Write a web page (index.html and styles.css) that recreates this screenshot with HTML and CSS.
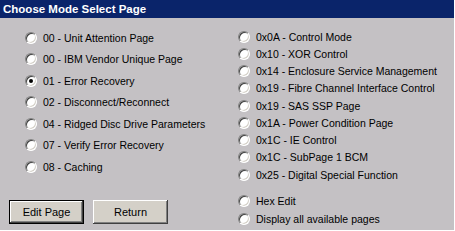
FILE: index.html
```html
<!doctype html>
<html lang="en">
  <head>
    <meta charset="UTF-8" />
    <title>Choose Mode Select Page</title>
    <link rel="stylesheet" href="styles.css">
  </head>
  <body>
    <div class="window">
      <div class="titlebar">Choose Mode Select Page</div>

      <div class="panel">
        <div class="col-left">
          <div class="options wide">
            <label class="opt"><span class="radio"></span>00 - Unit Attention Page</label>
            <label class="opt"><span class="radio"></span>00 - IBM Vendor Unique Page</label>
            <label class="opt"><span class="radio checked"></span>01 - Error Recovery</label>
            <label class="opt"><span class="radio"></span>02 - Disconnect/Reconnect</label>
            <label class="opt"><span class="radio"></span>04 - Ridged Disc Drive Parameters</label>
            <label class="opt"><span class="radio"></span>07 - Verify Error Recovery</label>
            <label class="opt"><span class="radio"></span>08 - Caching</label>
          </div>

          <div class="buttons">
            <button class="btn default">Edit Page</button>
            <button class="btn">Return</button>
          </div>
        </div>

        <div class="col-right">
          <div class="options">
            <label class="opt"><span class="radio"></span>0x0A - Control Mode</label>
            <label class="opt"><span class="radio"></span>0x10 - XOR Control</label>
            <label class="opt"><span class="radio"></span>0x14 - Enclosure Service Management</label>
            <label class="opt"><span class="radio"></span>0x19 - Fibre Channel Interface Control</label>
            <label class="opt"><span class="radio"></span>0x19 - SAS SSP Page</label>
            <label class="opt"><span class="radio"></span>0x1A - Power Condition Page</label>
            <label class="opt"><span class="radio"></span>0x1C - IE Control</label>
            <label class="opt"><span class="radio"></span>0x1C - SubPage 1 BCM</label>
            <label class="opt"><span class="radio"></span>0x25 - Digital Special Function</label>
          </div>

          <div class="options extra">
            <label class="opt"><span class="radio"></span>Hex Edit</label>
            <label class="opt"><span class="radio"></span>Display all available pages</label>
          </div>
        </div>
      </div>
    </div>
  </body>
</html>
```

FILE: styles.css
```css
body {
  margin: 0;
  font-family: "Liberation Sans", Arial, sans-serif;
  font-size: 10.5px;
  color: #000;
  background: #c4c1c4;
}

.window {
  width: 455px;
  height: 231px;
  box-sizing: border-box;
  background: #c4c1c4;
  border-right: 1px solid #ffffff;
  border-bottom: 1px solid #ffffff;
  overflow: hidden;
}

.titlebar {
  height: 18px;
  line-height: 18px;
  padding-left: 3px;
  background: #0a246a;
  color: #fff;
  font-weight: bold;
  font-size: 11.5px;
}

.panel {
  display: flex;
}

.col-left {
  width: 229px;
  padding: 9px 0 0 9px;
}

.col-right {
  padding-top: 10px;
}

.options {
  display: flex;
  flex-direction: column;
}

.options.wide {
  padding-left: 16px;
}

.opt {
  display: flex;
  align-items: center;
  height: 17.25px;
  white-space: nowrap;
}

.wide .opt {
  height: 21.5px;
}

.extra {
  margin-top: 9px;
}

.extra .opt {
  height: 18px;
}

.radio {
  position: relative;
  width: 12px;
  height: 12px;
  margin-right: 6px;
  box-sizing: border-box;
  border-radius: 50%;
  background: #fff;
  border: 1px solid;
  border-color: #808080 #ffffff #ffffff #808080;
  box-shadow:
    inset 1px 1px 0 #404040,
    inset -1px -1px 0 #d4d0c8;
  flex-shrink: 0;
}

.radio.checked::after {
  content: "";
  position: absolute;
  left: 3px;
  top: 3px;
  width: 4px;
  height: 4px;
  border-radius: 50%;
  background: #000;
}

.buttons {
  display: flex;
  gap: 9px;
  margin-top: 22px;
}

.btn {
  width: 75px;
  height: 24px;
  padding: 0;
  font-family: "Liberation Sans", Arial, sans-serif;
  font-size: 11px;
  color: #000;
  background: #d4d0c8;
  border: none;
  box-shadow:
    inset -1px -1px 0 #404040,
    inset 1px 1px 0 #ffffff,
    inset -2px -2px 0 #808080;
}

.btn.default {
  border: 1px solid #000;
}
```
